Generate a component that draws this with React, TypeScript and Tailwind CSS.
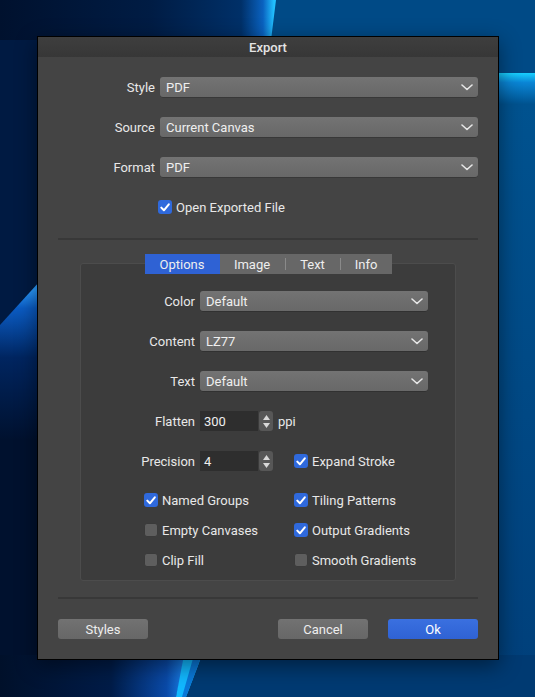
import React from 'react';

const font = { fontFamily: 'Roboto, "Noto Sans", sans-serif' };

function Chevron() {
  return (
    <svg width="12" height="7" viewBox="0 0 12 7" className="shrink-0">
      <path d="M1 1l5 4.5L11 1" fill="none" stroke="#e6e6e6" strokeWidth="1.6" strokeLinecap="round" strokeLinejoin="round" />
    </svg>
  );
}

function Select({ value }: { value: string }) {
  return (
    <div className="flex h-[20px] items-center rounded-[3px] bg-gradient-to-b from-[#737373] to-[#686868] pl-[6px] pr-[5px] text-[#efefef] shadow-[0_0.5px_0_rgba(0,0,0,0.35)]">
      <span className="flex-1 pt-[1px] leading-none">{value}</span>
      <Chevron />
    </div>
  );
}

function Check({ on, label }: { on?: boolean; label: string }) {
  return (
    <div className="flex h-[14px] items-center gap-[4px] whitespace-nowrap">
      {on ? (
        <div className="flex h-[14px] w-[14px] shrink-0 items-center justify-center rounded-[3px] bg-[#2f69dc]">
          <svg width="10" height="9" viewBox="0 0 10 9">
            <path d="M1.3 4.6l2.6 2.7L8.8 1.3" fill="none" stroke="#fff" strokeWidth="2" strokeLinecap="round" strokeLinejoin="round" />
          </svg>
        </div>
      ) : (
        <div className="h-[14px] w-[14px] shrink-0 rounded-[3px] border border-[#3a3a3a] bg-[#5e5e5e]" />
      )}
      <span className="pt-[1px] leading-none text-[#e8e8e8]">{label}</span>
    </div>
  );
}

function Stepper() {
  return (
    <div className="flex h-[20px] w-[14px] flex-col items-center justify-center gap-[3px] rounded-[3px] bg-[#575757]">
      <svg width="7" height="5" viewBox="0 0 7 5"><path d="M3.5 0L7 5H0z" fill="#d8d8d8" /></svg>
      <svg width="7" height="5" viewBox="0 0 7 5"><path d="M0 0h7L3.5 5z" fill="#d8d8d8" /></svg>
    </div>
  );
}

function Field({ value }: { value: string }) {
  return (
    <div className="flex h-[20px] w-[58px] items-center bg-[#2e2e2e] pl-[4px] pt-[1px] leading-none text-[#efefef]">{value}</div>
  );
}

function Wallpaper() {
  return (
    <svg className="absolute inset-0" width="535" height="697" viewBox="0 0 535 697">
      <defs>
        <linearGradient id="topDark" gradientUnits="userSpaceOnUse" x1="0" y1="0" x2="274" y2="0">
          <stop offset="0" stopColor="#00112e" />
          <stop offset="0.55" stopColor="#001c44" />
          <stop offset="0.88" stopColor="#003068" />
          <stop offset="0.96" stopColor="#0a62c0" />
          <stop offset="1" stopColor="#22c0ff" />
        </linearGradient>
        <linearGradient id="rightLow" gradientUnits="userSpaceOnUse" x1="0" y1="73" x2="0" y2="697">
          <stop offset="0" stopColor="#18d0ff" />
          <stop offset="0.015" stopColor="#0a86d6" />
          <stop offset="0.05" stopColor="#00528f" />
          <stop offset="1" stopColor="#003f7a" />
        </linearGradient>
        <linearGradient id="leftLow" gradientUnits="userSpaceOnUse" x1="0" y1="290" x2="0" y2="440">
          <stop offset="0" stopColor="#2a9cff" />
          <stop offset="0.12" stopColor="#0b5cc4" />
          <stop offset="0.45" stopColor="#002560" />
          <stop offset="1" stopColor="#00112e" />
        </linearGradient>
        <linearGradient id="bottomDark" gradientUnits="userSpaceOnUse" x1="0" y1="0" x2="185" y2="0">
          <stop offset="0" stopColor="#00102a" />
          <stop offset="0.6" stopColor="#001c48" />
          <stop offset="0.9" stopColor="#0a4aa8" />
          <stop offset="1" stopColor="#1a80e8" />
        </linearGradient>
      </defs>
      <rect width="535" height="697" fill="#00457f" />
      <rect x="0" y="0" width="535" height="73" fill="#004a86" />
      <rect x="270" y="73" width="265" height="624" fill="url(#rightLow)" />
      <polygon points="0,0 276,0 271,40 0,40" fill="url(#topDark)" />
      <rect x="0" y="40" width="40" height="620" fill="#001a42" />
      <polygon points="0,325 40,281 40,697 0,697" fill="url(#leftLow)" />
      <rect x="0" y="655" width="535" height="42" fill="#003a72" />
      <polygon points="0,655 186,655 176,697 0,697" fill="url(#bottomDark)" />
      <polygon points="184,655 202,655 186,697 176,697" fill="#12b8ff" />
      <polygon points="194,655 202,655 186,697 182,697" fill="#0a78d8" />
    </svg>
  );
}

export default function App() {
  return (
    <div className="relative h-[697px] w-[535px] overflow-hidden text-[13px] leading-[16px]" style={font}>
      <Wallpaper />
      <div className="relative pl-[37px] pt-[36px]">
        <div className="flex w-[462px] flex-col border border-black bg-[#444444] shadow-[0_6px_20px_rgba(0,0,0,0.45)]">
          {/* title bar */}
          <div className="flex h-[20px] items-center justify-center bg-gradient-to-b from-[#3e3e3e] to-[#373737] pt-[1px] font-medium text-[#e4e4e4]">
            Export
          </div>

          <div className="flex flex-col px-[20px] pb-[20px] pt-[20px] text-[#e8e8e8]">
            <div className="grid grid-cols-[97px_1fr] items-center gap-x-[5px] gap-y-[20px]">
              <span className="pt-[1px] text-right">Style</span>
              <Select value="PDF" />
              <span className="pt-[1px] text-right">Source</span>
              <Select value="Current Canvas" />
              <span className="pt-[1px] text-right">Format</span>
              <Select value="PDF" />
            </div>

            <div className="ml-[100px] mt-[23px]">
              <Check on label="Open Exported File" />
            </div>

            <div className="mt-[24px] h-[2px] bg-[#383838]" />

            {/* options group */}
            <div className="mt-[14px] flex flex-col px-[22px]">
              <div className="relative z-10 flex h-[20px] justify-center">
                <div className="flex h-[20px] items-center bg-[#676767] text-[#eeeeee]">
                  <div className="flex h-[20px] w-[75px] items-center justify-center bg-[#2f62d4] pt-[1px]">Options</div>
                  <div className="flex w-[65px] items-center justify-center pt-[1px]">Image</div>
                  <div className="h-[12px] w-px bg-[#8a8a8a]" />
                  <div className="flex w-[54px] items-center justify-center pt-[1px]">Text</div>
                  <div className="h-[12px] w-px bg-[#8a8a8a]" />
                  <div className="flex w-[51px] items-center justify-center pt-[1px]">Info</div>
                </div>
              </div>
              <div className="-mt-[11px] flex flex-col rounded-[3px] border border-[#4c4c4c] bg-[#3c3c3c] pb-[13px] pt-[27px]">
                <div className="grid grid-cols-[114px_228px] items-center gap-x-[5px] gap-y-[20px]">
                  <span className="pt-[1px] text-right">Color</span>
                  <Select value="Default" />
                  <span className="pt-[1px] text-right">Content</span>
                  <Select value="LZ77" />
                  <span className="pt-[1px] text-right">Text</span>
                  <Select value="Default" />
                  <span className="pt-[1px] text-right">Flatten</span>
                  <div className="flex items-center">
                    <Field value="300" />
                    <div className="ml-[1px]"><Stepper /></div>
                    <span className="ml-[5px] pt-[1px]">ppi</span>
                  </div>
                  <span className="pt-[1px] text-right">Precision</span>
                  <div className="flex items-center">
                    <Field value="4" />
                    <div className="ml-[1px]"><Stepper /></div>
                    <div className="ml-[21px]"><Check on label="Expand Stroke" /></div>
                  </div>
                </div>

                <div className="ml-[63px] mt-[22px] grid grid-cols-[150px_1fr] gap-y-[16px]">
                  <Check on label="Named Groups" />
                  <Check on label="Tiling Patterns" />
                  <Check label="Empty Canvases" />
                  <Check on label="Output Gradients" />
                  <Check label="Clip Fill" />
                  <Check label="Smooth Gradients" />
                </div>
              </div>
            </div>

            <div className="mt-[16px] h-[2px] bg-[#383838]" />

            <div className="mt-[20px] flex items-center text-[#eeeeee]">
              <button className="flex h-[20px] w-[90px] items-center justify-center rounded-[3px] bg-gradient-to-b from-[#727272] to-[#676767] pt-[1px]">Styles</button>
              <div className="flex-1" />
              <button className="flex h-[20px] w-[90px] items-center justify-center rounded-[3px] bg-gradient-to-b from-[#727272] to-[#676767] pt-[1px]">Cancel</button>
              <button className="ml-[20px] flex h-[20px] w-[90px] items-center justify-center rounded-[3px] bg-gradient-to-b from-[#3a70e0] to-[#2f62d4] pt-[1px] text-white">Ok</button>
            </div>
          </div>
        </div>
      </div>
    </div>
  );
}
